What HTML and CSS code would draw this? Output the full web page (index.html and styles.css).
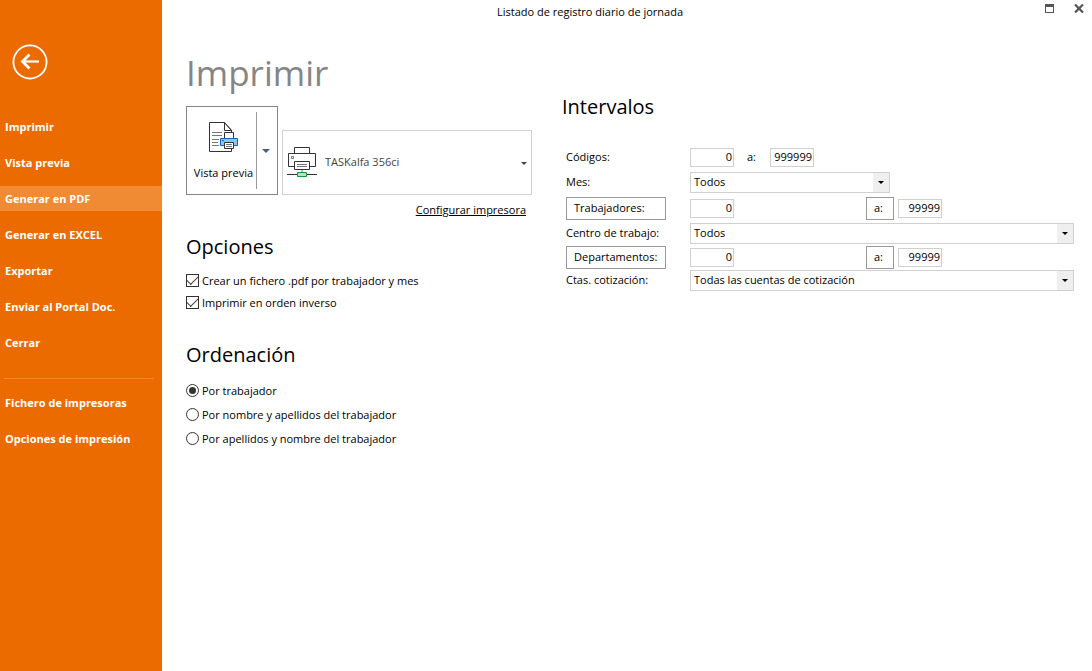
FILE: index.html
```html
<!DOCTYPE html>
<html lang="es">
<head>
<meta charset="utf-8">
<title>Listado de registro diario de jornada</title>
<link rel="stylesheet" href="styles.css">
</head>
<body>
<div class="app">
  <aside class="sidebar">
    <button class="back" type="button" aria-label="Volver">
      <svg width="36" height="36" viewBox="0 0 36 36" fill="none" stroke="#fff">
        <circle cx="18" cy="18" r="16.6" stroke-width="1.8"/>
        <path d="M27 17.500H11" stroke-width="2.200"/>
        <path d="M17.500 10.500L10.500 17.500L17.500 24.500" stroke-width="2.800"/>
      </svg>
    </button>
    <nav class="menu">
      <button class="menu-item" type="button">Imprimir</button>
      <button class="menu-item" type="button">Vista previa</button>
      <button class="menu-item active" type="button">Generar en PDF</button>
      <button class="menu-item" type="button">Generar en EXCEL</button>
      <button class="menu-item" type="button">Exportar</button>
      <button class="menu-item" type="button">Enviar al Portal Doc.</button>
      <button class="menu-item" type="button">Cerrar</button>
      <hr class="menu-line">
      <button class="menu-item" type="button">Fichero de impresoras</button>
      <button class="menu-item" type="button">Opciones de impresión</button>
    </nav>
  </aside>

  <div class="main">
    <header class="titlebar">
      <div class="title">Listado de registro diario de jornada</div>
      <div class="window-buttons">
        <button class="win" type="button" aria-label="Maximizar">
          <svg width="9" height="9" viewBox="0 0 9 9" shape-rendering="crispEdges"><path d="M0 0h9v9H0zM1 3v5h7V3z" fill="#555" fill-rule="evenodd"/></svg>
        </button>
        <button class="win" type="button" aria-label="Cerrar ventana">
          <svg width="10" height="9" viewBox="0 0 10 9"><path d="M1 .5L9 8.500M9 .5L1 8.500" stroke="#555" stroke-width="2.200"/></svg>
        </button>
      </div>
    </header>

    <div class="content">
      <section class="left">
        <h1>Imprimir</h1>
        <div class="print-row">
          <div class="preview">
            <button class="preview-main" type="button">
              <svg width="30" height="31" viewBox="0 0 30 31" fill="none">
                <path d="M.5.5H15.500L22.500 8.500V29.500H.5z" fill="#fff" stroke="#333"/>
                <path d="M15.500.5V8.500H22.500M15.500.5L23 9" stroke="#333"/>
                <path d="M3 10.500H13M3 13.500H13M3 17.500H10M3 20.500H9M3 23.500H10" stroke="#777"/>
                <path d="M15.500 16.500V10.500H24.500V16.500" fill="#fff" stroke="#333"/>
                <path d="M11.500 16.500H28.500V23.500H11.500z" fill="#8cc4f0" stroke="#0f67b5"/>
                <path d="M13 18.500h2" stroke="#0f67b5"/>
                <path d="M15.500 20.500H24.500V26.500H15.500z" fill="#fff" stroke="#333"/>
                <path d="M17 22.500h6M17 24.500h6" stroke="#777"/>
              </svg>
              <span>Vista previa</span>
            </button>
            <button class="preview-more" type="button" aria-label="Más opciones de vista previa"><span class="caret"></span></button>
          </div>
          <div class="picker printer">
            <svg class="printer-icon" width="30" height="31" viewBox="0 0 30 31" fill="none">
              <path d="M7.500 6.500V.5H22.500V6.500" fill="#fff" stroke="#333"/>
              <path d="M1.500 6.500H28.500V19.500H1.500z" fill="#fff" stroke="#333"/>
              <path d="M4.500 9.500h2v2h-2z" stroke="#777"/>
              <path d="M7.500 14.500H22.500V22.500H7.500z" fill="#fff" stroke="#333"/>
              <path d="M10 17.500H20M10 19.500H20" stroke="#777"/>
              <path d="M15 23v3" stroke="#bbb" stroke-width="2"/>
              <path d="M0 27.500H30" stroke="#333"/>
              <path d="M10.500 25.500H19.500V29.500H10.500z" fill="#b9e3bf" stroke="#0b9a3b"/>
            </svg>
            <select aria-label="Impresora"><option>TASKalfa 356ci</option></select>
          </div>
        </div>
        <a class="configure" href="#">Configurar impresora</a>

        <h2>Opciones</h2>
        <div class="choices checks">
          <label class="choice"><input type="checkbox" checked>Crear un fichero .pdf por trabajador y mes</label>
          <label class="choice"><input type="checkbox" checked>Imprimir en orden inverso</label>
        </div>

        <h2>Ordenación</h2>
        <div class="choices radios">
          <label class="choice"><input type="radio" name="orden" checked>Por trabajador</label>
          <label class="choice"><input type="radio" name="orden">Por nombre y apellidos del trabajador</label>
          <label class="choice"><input type="radio" name="orden">Por apellidos y nombre del trabajador</label>
        </div>
      </section>

      <section class="right">
        <h2>Intervalos</h2>
        <div class="form">
          <label for="cod1">Códigos:</label>
          <div class="range">
            <input class="num" id="cod1" type="text" value="0">
            <label class="to" for="cod2">a:</label>
            <input class="num" id="cod2" type="text" value="999999">
          </div>
          <label for="mes">Mes:</label>
          <div class="picker month"><select id="mes"><option>Todos</option></select></div>
          <button class="box" type="button">Trabajadores:</button>
          <div class="range wide">
            <input class="num" type="text" value="0" aria-label="Trabajadores desde">
            <button class="box small" type="button">a:</button>
            <input class="num" type="text" value="99999" aria-label="Trabajadores hasta">
          </div>
          <label for="centro">Centro de trabajo:</label>
          <div class="picker"><select id="centro"><option>Todos</option></select></div>
          <button class="box" type="button">Departamentos:</button>
          <div class="range wide">
            <input class="num" type="text" value="0" aria-label="Departamentos desde">
            <button class="box small" type="button">a:</button>
            <input class="num" type="text" value="99999" aria-label="Departamentos hasta">
          </div>
          <label for="ctas">Ctas. cotización:</label>
          <div class="picker"><select id="ctas"><option>Todas las cuentas de cotización</option></select></div>
        </div>
      </section>
    </div>
  </div>
</div>
</body>
</html>
```
FILE: styles.css
```css
* {
  box-sizing: border-box;
}

body {
  margin: 0;
  background: #fff;
  color: #000;
  font: 11px/16px "Open Sans", "Noto Sans", sans-serif;
}

button,
input,
select {
  margin: 0;
  font: inherit;
  color: inherit;
}

button {
  padding: 0;
  border: 0;
  background: none;
}

svg {
  display: block;
}

.app {
  display: flex;
  min-height: 100vh;
}

/* Sidebar */

.sidebar {
  flex: none;
  width: 162px;
  padding-top: 44px;
  background: #eb6b00;
  color: #fff;
}

.back {
  display: block;
  margin-left: 12px;
}

.menu {
  display: flex;
  flex-direction: column;
  gap: 11px;
  margin-top: 34px;
}

.menu-item {
  height: 25px;
  padding-left: 5px;
  text-align: left;
  font-weight: 700;
}

.menu-item.active {
  background: #f08a33;
}

.menu-line {
  width: 150px;
  height: 1px;
  margin: 12px 0 0 4px;
  border: 0;
  background: #f08a33;
}

/* Title bar */

.main {
  flex: 1;
  min-width: 0;
}

.titlebar {
  display: flex;
  height: 24px;
}

.title {
  flex: 1;
  padding-top: 4px;
  text-align: center;
}

.window-buttons {
  display: flex;
  gap: 20px;
  align-items: flex-start;
  width: 74px;
  padding: 4px 8px 0 0;
  justify-content: flex-end;
}

/* Content */

.content {
  display: flex;
  gap: 30px;
  padding: 0 18px 24px 24px;
}

.left {
  flex: none;
  width: 346px;
  padding-top: 25px;
}

h1 {
  margin: 0;
  color: #858585;
  font-size: 35px;
  line-height: 48px;
  font-weight: 400;
}

h2 {
  margin: 0;
  font-size: 20px;
  line-height: 28px;
  font-weight: 400;
}

.print-row {
  display: flex;
  gap: 4px;
  align-items: flex-end;
  margin-top: 9px;
}

.preview {
  display: flex;
  align-items: center;
  width: 92px;
  height: 89px;
  border: 1px solid #858585;
}

.preview-main {
  display: flex;
  flex: 1;
  flex-direction: column;
  gap: 12px;
  align-items: center;
  padding: 2px 0 0 4px;
  white-space: nowrap;
}

.preview-more {
  display: flex;
  width: 21px;
  height: 77px;
  align-items: center;
  justify-content: center;
  padding-right: 3px;
  border-left: 1px solid #999;
}

.caret {
  border: 4px solid transparent;
  border-top-color: #44608c;
  border-bottom: 0;
}

.picker {
  position: relative;
  height: 21px;
  border: 1px solid #d0d0d0;
}

.picker select {
  display: block;
  width: 100%;
  height: 100%;
  padding: 0 20px 0 3px;
  border: 0;
  border-radius: 0;
  appearance: none;
  background: linear-gradient(#efefef, #efefef) right / 16px 100% no-repeat #fff;
}

.picker::after {
  content: "";
  position: absolute;
  top: 50%;
  right: 5px;
  margin-top: -1px;
  border: 3px solid transparent;
  border-top-color: #000;
  border-bottom: 0;
  pointer-events: none;
}

.month {
  width: 200px;
}

.printer {
  flex: 1;
  height: 65px;
}

.printer select {
  padding-bottom: 2px;
  padding-left: 42px;
  background: #fff;
  color: #444;
}

.printer::after {
  right: 4px;
  border-top-color: #444;
}

.printer-icon {
  position: absolute;
  top: 16px;
  left: 4px;
  pointer-events: none;
}

.configure {
  display: block;
  width: fit-content;
  margin: 7px 6px 15px auto;
  color: #000;
}

.choices {
  display: grid;
}

.checks {
  grid-auto-rows: 22px;
  margin: 9px 0 27px;
}

.radios {
  grid-auto-rows: 24px;
  margin-top: 10px;
}

.choice {
  display: flex;
  gap: 3px;
  align-items: center;
}

.choice input {
  display: grid;
  width: 13px;
  height: 13px;
  margin-bottom: 1px;
  place-items: center;
  border: 1px solid #333;
  appearance: none;
}

.choice input[type="radio"] {
  border-radius: 50%;
}

.choice input:checked::before {
  content: "";
}

.choice input[type="radio"]:checked::before {
  width: 7px;
  height: 7px;
  border-radius: 50%;
  background: #333;
}

.choice input[type="checkbox"]:checked::before {
  width: 10px;
  height: 5px;
  margin-bottom: 3px;
  border: solid #444;
  border-width: 0 0 1px 1px;
  transform: rotate(-45deg);
}

/* Intervals */

.right {
  flex: 1;
  min-width: 0;
  padding-top: 69px;
}

.form {
  display: grid;
  grid-template-columns: 100px minmax(0, 1fr);
  grid-template-rows: 24px 26px 26px 24px 24px 22px;
  column-gap: 24px;
  align-items: center;
  margin: 24px 0 0 4px;
}

.range {
  display: flex;
  align-items: center;
}

.num {
  width: 44px;
  height: 19px;
  padding: 0 1px 1px 0;
  border: 1px solid #d0d0d0;
  text-align: right;
}

.to {
  width: 36px;
  padding-left: 13px;
}

.box {
  height: 23px;
  padding: 0 7px;
  border: 1px solid #999;
  text-align: left;
}

.small {
  width: 28px;
}

.wide {
  gap: 4px;
}

.wide .small {
  margin-left: 128px;
}
```
